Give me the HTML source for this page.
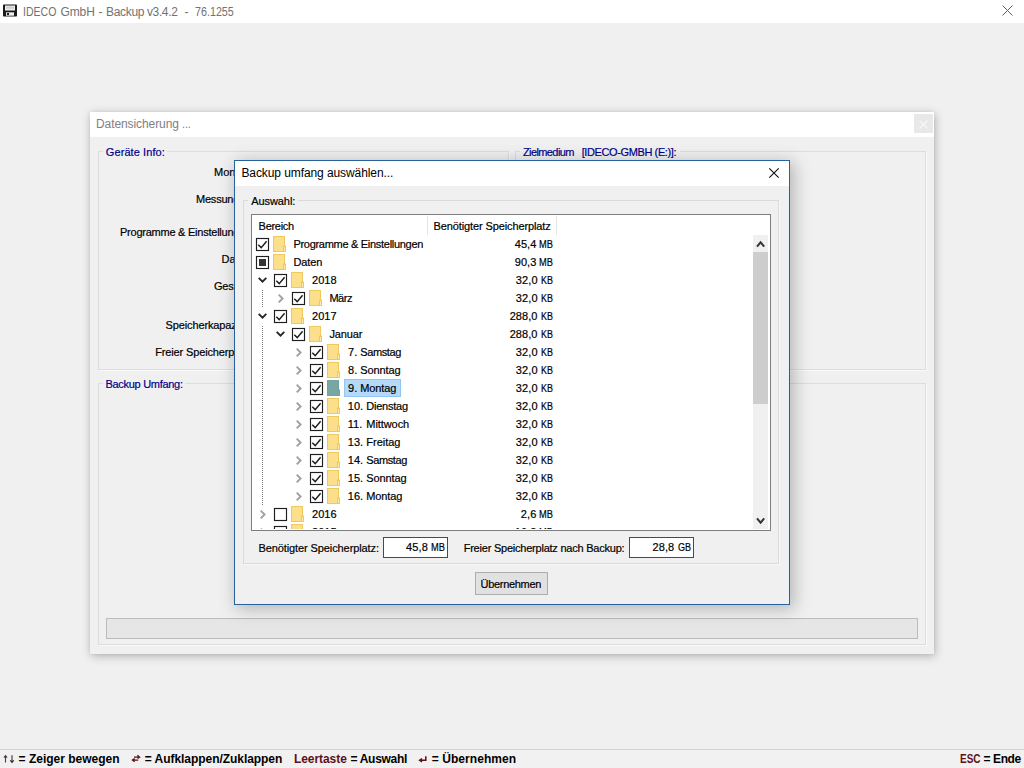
<!DOCTYPE html>
<html><head><meta charset="utf-8"><title>IDECO GmbH - Backup</title><style>
html,body{margin:0;padding:0;}
body{width:1024px;height:768px;overflow:hidden;background:#f0f0f0;position:relative;font-family:"Liberation Sans",sans-serif;color:#000;}
.t{position:absolute;white-space:pre;line-height:1;}
.s{-webkit-text-stroke:0.2px currentColor;}
.b{position:absolute;box-sizing:border-box;}
svg{position:absolute;overflow:visible;}
</style></head><body>
<div class="b" style="left:0px;top:0px;width:1024px;height:23px;background:#fff;"></div>
<svg style="left:3px;top:4px" width="14" height="13" viewBox="0 0 14 13"><rect x="0" y="0.5" width="14" height="12" rx="0.8" fill="#1a1a1a"/><rect x="2" y="1.5" width="10" height="5" fill="#ededed"/><rect x="3.2" y="2.6" width="7.6" height="2.2" fill="#cfcfcf"/><rect x="3" y="8.3" width="8" height="3.4" fill="#ececec"/><rect x="4" y="9" width="2" height="2" fill="#1a1a1a"/></svg>
<span class="t" style="left:23.25px;top:6px;font-size:12px;color:#727272;transform:scaleX(0.8789);transform-origin:0 0;">IDECO</span>
<span class="t" style="left:60.50px;top:6px;font-size:12px;letter-spacing:-0.123px;color:#727272;">GmbH</span>
<span class="t" style="left:98.60px;top:6px;font-size:12px;color:#727272;">-</span>
<span class="t" style="left:106.00px;top:6px;font-size:12px;letter-spacing:-0.325px;color:#727272;">Backup</span>
<span class="t" style="left:147.00px;top:6px;font-size:12px;letter-spacing:-0.378px;color:#727272;">v3.4.2</span>
<span class="t" style="left:184.50px;top:6px;font-size:12px;color:#727272;">-</span>
<span class="t" style="left:195.10px;top:6px;font-size:12px;color:#727272;transform:scaleX(0.8945);transform-origin:0 0;">76.1255</span>
<svg style="left:1001.5px;top:4.5px" width="11" height="11" viewBox="0 0 11 11"><path d="M0.5 0.5L10.5 10.5M10.5 0.5L0.5 10.5" stroke="#5f5f5f" stroke-width="1" fill="none"/></svg>
<div class="b" style="left:90px;top:112px;width:844px;height:542px;background:#f0f0f0;box-shadow:1px 2px 9px 0 rgba(0,0,0,0.26),0 0 4px 0 rgba(0,0,0,0.06);"></div>
<div class="b" style="left:90px;top:112px;width:844px;height:25px;background:#fff;"></div>
<span class="t" style="left:96.00px;top:118px;font-size:12px;letter-spacing:-0.089px;color:#808080;">Datensicherung</span>
<span class="t" style="left:181.80px;top:118px;font-size:12px;color:#808080;transform:scaleX(0.8798);transform-origin:0 0;">...</span>
<div class="b" style="left:914px;top:114px;width:19px;height:19px;background:#e8e8e8;"></div>
<svg style="left:919px;top:120px" width="9" height="9" viewBox="0 0 9 9"><path d="M0.5 0.5L8.5 8.5M8.5 0.5L0.5 8.5" stroke="#f6f6f6" stroke-width="1.2" fill="none"/></svg>
<div class="b" style="left:98px;top:151px;width:411px;height:219px;border:1px solid #dddddd;box-shadow:1px 1px 0 #f9f9f9;"></div>
<div class="b" style="left:515px;top:151px;width:411px;height:219px;border:1px solid #dddddd;box-shadow:1px 1px 0 #f9f9f9;"></div>
<div class="b" style="left:98px;top:383px;width:828px;height:262px;border:1px solid #dddddd;box-shadow:1px 1px 0 #f9f9f9;"></div>
<div class="b" style="left:103px;top:145px;width:64px;height:12px;background:#f0f0f0;"></div>
<span class="t s" style="left:105.80px;top:147px;font-size:11px;letter-spacing:0.082px;color:#00008a;">Geräte Info:</span>
<div class="b" style="left:520px;top:145px;width:160px;height:12px;background:#f0f0f0;"></div>
<span class="t s" style="left:523.00px;top:147px;font-size:11px;letter-spacing:-0.606px;color:#00008a;">Zielmedium</span>
<span class="t s" style="left:581.70px;top:147px;font-size:11px;letter-spacing:-0.391px;color:#00008a;">[IDECO-GMBH (E:)]:</span>
<div class="b" style="left:103px;top:377px;width:82px;height:12px;background:#f0f0f0;"></div>
<span class="t s" style="left:105.50px;top:379px;font-size:11px;letter-spacing:-0.294px;color:#00008a;">Backup Umfang:</span>
<span class="t s" style="left:214.00px;top:167px;font-size:11px;letter-spacing:0.037px;">Monitor:</span>
<span class="t s" style="left:196.00px;top:194px;font-size:11px;letter-spacing:-0.214px;">Messungen:</span>
<span class="t s" style="left:120.00px;top:227px;font-size:11px;letter-spacing:-0.241px;">Programme &amp; Einstellungen:</span>
<span class="t s" style="left:221.50px;top:254px;font-size:11px;letter-spacing:0.018px;">Daten:</span>
<span class="t s" style="left:214.00px;top:281px;font-size:11px;letter-spacing:-0.262px;">Gesamt:</span>
<span class="t s" style="left:165.50px;top:320px;font-size:11px;letter-spacing:-0.118px;">Speicherkapazität:</span>
<span class="t s" style="left:155.20px;top:347px;font-size:11px;letter-spacing:-0.135px;">Freier Speicherplatz:</span>
<div class="b" style="left:106px;top:618px;width:812px;height:21px;background:#e6e6e6;border:1px solid #bcbcbc;"></div>
<div class="b" style="left:0px;top:749px;width:1024px;height:1px;background:#d4d4d4;"></div>
<div class="b" style="left:0px;top:750px;width:1024px;height:18px;background:#f1f1f1;"></div>
<svg style="left:0;top:0" width="1" height="1"><path d="M5.5 762.6V755.6M3.9 757.6L5.5 755.6L7.1 757.6" stroke="#5a3c28" stroke-width="1.1" fill="none"/><path d="M12 755.2V762.2M10.2 760.3L12 762.4L13.8 760.3" stroke="#2e2e38" stroke-width="1.1" fill="none"/></svg>
<span class="t" style="left:18.60px;top:753px;font-size:12px;letter-spacing:-0.002px;font-weight:bold;">= Zeiger bewegen</span>
<svg style="left:0;top:0" width="1" height="1"><path d="M134 757.1H139.6M137.4 755.2L139.6 757.1L137.6 758.6M132.4 760.1H138.2M134.6 758.6L132.4 760.1L134.6 761.8" stroke="#5e1018" stroke-width="1.3" fill="none"/></svg>
<span class="t" style="left:144.80px;top:753px;font-size:12px;letter-spacing:-0.051px;font-weight:bold;">= Aufklappen/Zuklappen</span>
<span class="t" style="left:294.00px;top:753px;font-size:12px;letter-spacing:-0.070px;color:#5e1018;font-weight:bold;">Leertaste</span>
<span class="t" style="left:350.40px;top:753px;font-size:12px;letter-spacing:-0.280px;font-weight:bold;">= Auswahl</span>
<svg style="left:0;top:0" width="1" height="1"><path d="M425.8 756.2V760.2H420.4M422 758.5L419.6 760.2L422 761.9" stroke="#5e1018" stroke-width="1.5" fill="none"/></svg>
<span class="t" style="left:431.80px;top:753px;font-size:12px;letter-spacing:0.056px;font-weight:bold;">= Übernehmen</span>
<span class="t" style="left:960.30px;top:753px;font-size:12px;color:#5e1018;font-weight:bold;transform:scaleX(0.8349);transform-origin:0 0;">ESC</span>
<span class="t" style="left:983.60px;top:753px;font-size:12px;letter-spacing:-0.416px;font-weight:bold;">= Ende</span>
<div class="b" style="left:234px;top:160px;width:556px;height:445px;background:#f0f0f0;border:1px solid #27629f;box-shadow:3px 3px 16px 1px rgba(0,0,0,0.25),inset 0 0 0 1px #e4f3fb;"></div>
<div class="b" style="left:235px;top:161px;width:554px;height:25px;background:#fff;"></div>
<span class="t" style="left:241.40px;top:167px;font-size:12px;letter-spacing:-0.084px;">Backup umfang auswählen...</span>
<svg style="left:769px;top:168px" width="10" height="10" viewBox="0 0 10 10"><path d="M0.3 0.3L9.7 9.7M9.7 0.3L0.3 9.7" stroke="#111" stroke-width="1.15" fill="none"/></svg>
<div class="b" style="left:243px;top:200px;width:536px;height:364px;border:1px solid #dadada;box-shadow:1px 1px 0 #f9f9f9;"></div>
<div class="b" style="left:248px;top:194px;width:50px;height:12px;background:#f0f0f0;"></div>
<span class="t s" style="left:251.30px;top:196px;font-size:11px;letter-spacing:-0.091px;">Auswahl:</span>
<div class="b lv" style="left:251px;top:214px;width:520px;height:317px;background:#fff;border:1px solid #7e7e7e;overflow:hidden;"></div>
<div class="b" style="left:0;top:0;width:770px;height:529px;overflow:hidden;">
<div class="b" style="left:427px;top:216px;width:1px;height:19px;background:#e5e5e5;"></div>
<div class="b" style="left:556px;top:216px;width:1px;height:19px;background:#e5e5e5;"></div>
<span class="t s" style="left:258.60px;top:221px;font-size:11px;letter-spacing:-0.300px;">Bereich</span>
<span class="t s" style="left:433.60px;top:221px;font-size:11px;letter-spacing:-0.116px;">Benötigter Speicherplatz</span>
<div class="b" style="left:753px;top:235px;width:15px;height:295px;background:#f0f0f0;"></div>
<div class="b" style="left:753px;top:252px;width:15px;height:152px;background:#cdcdcd;"></div>
<svg style="left:753px;top:235px" width="16" height="17" viewBox="0 0 16 17"><path d="M4 11.6L7.6 7.4L11.2 11.6" stroke="#333" stroke-width="2" fill="none"/></svg>
<svg style="left:753px;top:513px" width="16" height="17" viewBox="0 0 16 17"><path d="M4 5.4L7.6 9.6L11.2 5.4" stroke="#333" stroke-width="2" fill="none"/></svg>
<svg style="left:256px;top:238px" width="13" height="13" viewBox="0 0 13 13"><rect x="0.5" y="0.5" width="12" height="12" fill="#fff" stroke="#1e1e1e" stroke-width="1.15"/><path d="M2.3 6.8L5.2 9.6L10.6 3.3" stroke="#1c1c1c" stroke-width="1.45" fill="none"/></svg>
<svg style="left:273px;top:236px" width="13" height="16" viewBox="0 0 13 16"><rect x="0.5" y="0.5" width="11" height="15" fill="#fbdf8a" stroke="#efc95f"/><rect x="10.5" y="10" width="2" height="5.5" fill="#fdeab0" stroke="#efc95f"/></svg>
<span class="t s" style="left:293.40px;top:239px;font-size:11px;letter-spacing:-0.290px;">Programme &amp; Einstellungen</span>
<span class="t s" style="left:538.60px;top:239px;font-size:11px;transform:scaleX(0.8424);transform-origin:0 0;">MB</span>
<span class="t s" style="left:514.70px;top:239px;font-size:11px;letter-spacing:0.096px;">45,4</span>
<svg style="left:256px;top:256px" width="13" height="13" viewBox="0 0 13 13"><rect x="0.5" y="0.5" width="12" height="12" fill="#fff" stroke="#1e1e1e" stroke-width="1.15"/><rect x="3" y="3" width="7" height="7" fill="#333"/></svg>
<svg style="left:273px;top:254px" width="13" height="16" viewBox="0 0 13 16"><rect x="0.5" y="0.5" width="11" height="15" fill="#fbdf8a" stroke="#efc95f"/><rect x="10.5" y="10" width="2" height="5.5" fill="#fdeab0" stroke="#efc95f"/></svg>
<span class="t s" style="left:293.40px;top:257px;font-size:11px;letter-spacing:-0.089px;">Daten</span>
<span class="t s" style="left:538.60px;top:257px;font-size:11px;transform:scaleX(0.8424);transform-origin:0 0;">MB</span>
<span class="t s" style="left:514.70px;top:257px;font-size:11px;letter-spacing:0.096px;">90,3</span>
<svg style="left:0;top:0" width="1" height="1"><path d="M258.7 277.9L262.5 281.7L266.3 277.9" stroke="#262626" stroke-width="1.9" fill="none"/></svg>
<svg style="left:274px;top:274px" width="13" height="13" viewBox="0 0 13 13"><rect x="0.5" y="0.5" width="12" height="12" fill="#fff" stroke="#1e1e1e" stroke-width="1.15"/><path d="M2.3 6.8L5.2 9.6L10.6 3.3" stroke="#1c1c1c" stroke-width="1.45" fill="none"/></svg>
<svg style="left:291px;top:272px" width="13" height="16" viewBox="0 0 13 16"><rect x="0.5" y="0.5" width="11" height="15" fill="#fbdf8a" stroke="#efc95f"/><rect x="10.5" y="10" width="2" height="5.5" fill="#fdeab0" stroke="#efc95f"/></svg>
<span class="t s" style="left:312.00px;top:275px;font-size:11px;letter-spacing:0.042px;">2018</span>
<span class="t s" style="left:540.60px;top:275px;font-size:11px;transform:scaleX(0.8110);transform-origin:0 0;">KB</span>
<span class="t s" style="left:515.80px;top:275px;font-size:11px;letter-spacing:0.096px;">32,0</span>
<svg style="left:0;top:0" width="1" height="1"><path d="M278.7 294.6L282.6 298.5L278.7 302.4" stroke="#a0a0a0" stroke-width="1.9" fill="none"/></svg>
<svg style="left:292px;top:292px" width="13" height="13" viewBox="0 0 13 13"><rect x="0.5" y="0.5" width="12" height="12" fill="#fff" stroke="#1e1e1e" stroke-width="1.15"/><path d="M2.3 6.8L5.2 9.6L10.6 3.3" stroke="#1c1c1c" stroke-width="1.45" fill="none"/></svg>
<svg style="left:309px;top:290px" width="13" height="16" viewBox="0 0 13 16"><rect x="0.5" y="0.5" width="11" height="15" fill="#fbdf8a" stroke="#efc95f"/><rect x="10.5" y="10" width="2" height="5.5" fill="#fdeab0" stroke="#efc95f"/></svg>
<span class="t s" style="left:329.40px;top:293px;font-size:11px;letter-spacing:-0.481px;">März</span>
<span class="t s" style="left:540.60px;top:293px;font-size:11px;transform:scaleX(0.8110);transform-origin:0 0;">KB</span>
<span class="t s" style="left:515.80px;top:293px;font-size:11px;letter-spacing:0.096px;">32,0</span>
<svg style="left:0;top:0" width="1" height="1"><path d="M258.7 313.9L262.5 317.7L266.3 313.9" stroke="#262626" stroke-width="1.9" fill="none"/></svg>
<svg style="left:274px;top:310px" width="13" height="13" viewBox="0 0 13 13"><rect x="0.5" y="0.5" width="12" height="12" fill="#fff" stroke="#1e1e1e" stroke-width="1.15"/><path d="M2.3 6.8L5.2 9.6L10.6 3.3" stroke="#1c1c1c" stroke-width="1.45" fill="none"/></svg>
<svg style="left:291px;top:308px" width="13" height="16" viewBox="0 0 13 16"><rect x="0.5" y="0.5" width="11" height="15" fill="#fbdf8a" stroke="#efc95f"/><rect x="10.5" y="10" width="2" height="5.5" fill="#fdeab0" stroke="#efc95f"/></svg>
<span class="t s" style="left:312.00px;top:311px;font-size:11px;letter-spacing:0.042px;">2017</span>
<span class="t s" style="left:540.60px;top:311px;font-size:11px;transform:scaleX(0.8110);transform-origin:0 0;">KB</span>
<span class="t s" style="left:509.70px;top:311px;font-size:11px;letter-spacing:0.068px;">288,0</span>
<svg style="left:0;top:0" width="1" height="1"><path d="M276.7 331.9L280.5 335.7L284.3 331.9" stroke="#262626" stroke-width="1.9" fill="none"/></svg>
<svg style="left:292px;top:328px" width="13" height="13" viewBox="0 0 13 13"><rect x="0.5" y="0.5" width="12" height="12" fill="#fff" stroke="#1e1e1e" stroke-width="1.15"/><path d="M2.3 6.8L5.2 9.6L10.6 3.3" stroke="#1c1c1c" stroke-width="1.45" fill="none"/></svg>
<svg style="left:309px;top:326px" width="13" height="16" viewBox="0 0 13 16"><rect x="0.5" y="0.5" width="11" height="15" fill="#fbdf8a" stroke="#efc95f"/><rect x="10.5" y="10" width="2" height="5.5" fill="#fdeab0" stroke="#efc95f"/></svg>
<span class="t s" style="left:329.40px;top:329px;font-size:11px;letter-spacing:-0.127px;">Januar</span>
<span class="t s" style="left:540.60px;top:329px;font-size:11px;transform:scaleX(0.8110);transform-origin:0 0;">KB</span>
<span class="t s" style="left:509.70px;top:329px;font-size:11px;letter-spacing:0.068px;">288,0</span>
<svg style="left:0;top:0" width="1" height="1"><path d="M296.7 348.6L300.6 352.5L296.7 356.4" stroke="#a0a0a0" stroke-width="1.9" fill="none"/></svg>
<svg style="left:310px;top:346px" width="13" height="13" viewBox="0 0 13 13"><rect x="0.5" y="0.5" width="12" height="12" fill="#fff" stroke="#1e1e1e" stroke-width="1.15"/><path d="M2.3 6.8L5.2 9.6L10.6 3.3" stroke="#1c1c1c" stroke-width="1.45" fill="none"/></svg>
<svg style="left:327px;top:344px" width="13" height="16" viewBox="0 0 13 16"><rect x="0.5" y="0.5" width="11" height="15" fill="#fbdf8a" stroke="#efc95f"/><rect x="10.5" y="10" width="2" height="5.5" fill="#fdeab0" stroke="#efc95f"/></svg>
<span class="t s" style="left:348.10px;top:347px;font-size:11px;">7.</span>
<span class="t s" style="left:360.30px;top:347px;font-size:11px;letter-spacing:-0.402px;">Samstag</span>
<span class="t s" style="left:540.60px;top:347px;font-size:11px;transform:scaleX(0.8110);transform-origin:0 0;">KB</span>
<span class="t s" style="left:515.80px;top:347px;font-size:11px;letter-spacing:0.096px;">32,0</span>
<svg style="left:0;top:0" width="1" height="1"><path d="M296.7 366.6L300.6 370.5L296.7 374.4" stroke="#a0a0a0" stroke-width="1.9" fill="none"/></svg>
<svg style="left:310px;top:364px" width="13" height="13" viewBox="0 0 13 13"><rect x="0.5" y="0.5" width="12" height="12" fill="#fff" stroke="#1e1e1e" stroke-width="1.15"/><path d="M2.3 6.8L5.2 9.6L10.6 3.3" stroke="#1c1c1c" stroke-width="1.45" fill="none"/></svg>
<svg style="left:327px;top:362px" width="13" height="16" viewBox="0 0 13 16"><rect x="0.5" y="0.5" width="11" height="15" fill="#fbdf8a" stroke="#efc95f"/><rect x="10.5" y="10" width="2" height="5.5" fill="#fdeab0" stroke="#efc95f"/></svg>
<span class="t s" style="left:348.10px;top:365px;font-size:11px;">8.</span>
<span class="t s" style="left:360.30px;top:365px;font-size:11px;letter-spacing:-0.114px;">Sonntag</span>
<span class="t s" style="left:540.60px;top:365px;font-size:11px;transform:scaleX(0.8110);transform-origin:0 0;">KB</span>
<span class="t s" style="left:515.80px;top:365px;font-size:11px;letter-spacing:0.096px;">32,0</span>
<svg style="left:0;top:0" width="1" height="1"><path d="M296.7 384.6L300.6 388.5L296.7 392.4" stroke="#a0a0a0" stroke-width="1.9" fill="none"/></svg>
<div class="b" style="left:344px;top:379px;width:57px;height:18px;background:#b4d9f9;border:1px solid #92c7f3;"></div>
<svg style="left:310px;top:382px" width="13" height="13" viewBox="0 0 13 13"><rect x="0.5" y="0.5" width="12" height="12" fill="#fff" stroke="#1e1e1e" stroke-width="1.15"/><path d="M2.3 6.8L5.2 9.6L10.6 3.3" stroke="#1c1c1c" stroke-width="1.45" fill="none"/></svg>
<svg style="left:327px;top:380px" width="13" height="16" viewBox="0 0 13 16"><rect x="0.5" y="0.5" width="11" height="15" fill="#77a6a3" stroke="#72a19e"/><rect x="10.5" y="10" width="2" height="5.5" fill="#80adaa" stroke="#72a19e"/></svg>
<span class="t s" style="left:348.10px;top:383px;font-size:11px;">9.</span>
<span class="t s" style="left:360.30px;top:383px;font-size:11px;letter-spacing:-0.118px;">Montag</span>
<span class="t s" style="left:540.60px;top:383px;font-size:11px;transform:scaleX(0.8110);transform-origin:0 0;">KB</span>
<span class="t s" style="left:515.80px;top:383px;font-size:11px;letter-spacing:0.096px;">32,0</span>
<svg style="left:0;top:0" width="1" height="1"><path d="M296.7 402.6L300.6 406.5L296.7 410.4" stroke="#a0a0a0" stroke-width="1.9" fill="none"/></svg>
<svg style="left:310px;top:400px" width="13" height="13" viewBox="0 0 13 13"><rect x="0.5" y="0.5" width="12" height="12" fill="#fff" stroke="#1e1e1e" stroke-width="1.15"/><path d="M2.3 6.8L5.2 9.6L10.6 3.3" stroke="#1c1c1c" stroke-width="1.45" fill="none"/></svg>
<svg style="left:327px;top:398px" width="13" height="16" viewBox="0 0 13 16"><rect x="0.5" y="0.5" width="11" height="15" fill="#fbdf8a" stroke="#efc95f"/><rect x="10.5" y="10" width="2" height="5.5" fill="#fdeab0" stroke="#efc95f"/></svg>
<span class="t s" style="left:347.80px;top:401px;font-size:11px;">10.</span>
<span class="t s" style="left:366.30px;top:401px;font-size:11px;letter-spacing:-0.231px;">Dienstag</span>
<span class="t s" style="left:540.60px;top:401px;font-size:11px;transform:scaleX(0.8110);transform-origin:0 0;">KB</span>
<span class="t s" style="left:515.80px;top:401px;font-size:11px;letter-spacing:0.096px;">32,0</span>
<svg style="left:0;top:0" width="1" height="1"><path d="M296.7 420.6L300.6 424.5L296.7 428.4" stroke="#a0a0a0" stroke-width="1.9" fill="none"/></svg>
<svg style="left:310px;top:418px" width="13" height="13" viewBox="0 0 13 13"><rect x="0.5" y="0.5" width="12" height="12" fill="#fff" stroke="#1e1e1e" stroke-width="1.15"/><path d="M2.3 6.8L5.2 9.6L10.6 3.3" stroke="#1c1c1c" stroke-width="1.45" fill="none"/></svg>
<svg style="left:327px;top:416px" width="13" height="16" viewBox="0 0 13 16"><rect x="0.5" y="0.5" width="11" height="15" fill="#fbdf8a" stroke="#efc95f"/><rect x="10.5" y="10" width="2" height="5.5" fill="#fdeab0" stroke="#efc95f"/></svg>
<span class="t s" style="left:347.80px;top:419px;font-size:11px;">11.</span>
<span class="t s" style="left:366.30px;top:419px;font-size:11px;letter-spacing:-0.072px;">Mittwoch</span>
<span class="t s" style="left:540.60px;top:419px;font-size:11px;transform:scaleX(0.8110);transform-origin:0 0;">KB</span>
<span class="t s" style="left:515.80px;top:419px;font-size:11px;letter-spacing:0.096px;">32,0</span>
<svg style="left:0;top:0" width="1" height="1"><path d="M296.7 438.6L300.6 442.5L296.7 446.4" stroke="#a0a0a0" stroke-width="1.9" fill="none"/></svg>
<svg style="left:310px;top:436px" width="13" height="13" viewBox="0 0 13 13"><rect x="0.5" y="0.5" width="12" height="12" fill="#fff" stroke="#1e1e1e" stroke-width="1.15"/><path d="M2.3 6.8L5.2 9.6L10.6 3.3" stroke="#1c1c1c" stroke-width="1.45" fill="none"/></svg>
<svg style="left:327px;top:434px" width="13" height="16" viewBox="0 0 13 16"><rect x="0.5" y="0.5" width="11" height="15" fill="#fbdf8a" stroke="#efc95f"/><rect x="10.5" y="10" width="2" height="5.5" fill="#fdeab0" stroke="#efc95f"/></svg>
<span class="t s" style="left:347.80px;top:437px;font-size:11px;">13.</span>
<span class="t s" style="left:366.30px;top:437px;font-size:11px;letter-spacing:-0.023px;">Freitag</span>
<span class="t s" style="left:540.60px;top:437px;font-size:11px;transform:scaleX(0.8110);transform-origin:0 0;">KB</span>
<span class="t s" style="left:515.80px;top:437px;font-size:11px;letter-spacing:0.096px;">32,0</span>
<svg style="left:0;top:0" width="1" height="1"><path d="M296.7 456.6L300.6 460.5L296.7 464.4" stroke="#a0a0a0" stroke-width="1.9" fill="none"/></svg>
<svg style="left:310px;top:454px" width="13" height="13" viewBox="0 0 13 13"><rect x="0.5" y="0.5" width="12" height="12" fill="#fff" stroke="#1e1e1e" stroke-width="1.15"/><path d="M2.3 6.8L5.2 9.6L10.6 3.3" stroke="#1c1c1c" stroke-width="1.45" fill="none"/></svg>
<svg style="left:327px;top:452px" width="13" height="16" viewBox="0 0 13 16"><rect x="0.5" y="0.5" width="11" height="15" fill="#fbdf8a" stroke="#efc95f"/><rect x="10.5" y="10" width="2" height="5.5" fill="#fdeab0" stroke="#efc95f"/></svg>
<span class="t s" style="left:347.80px;top:455px;font-size:11px;">14.</span>
<span class="t s" style="left:366.30px;top:455px;font-size:11px;letter-spacing:-0.402px;">Samstag</span>
<span class="t s" style="left:540.60px;top:455px;font-size:11px;transform:scaleX(0.8110);transform-origin:0 0;">KB</span>
<span class="t s" style="left:515.80px;top:455px;font-size:11px;letter-spacing:0.096px;">32,0</span>
<svg style="left:0;top:0" width="1" height="1"><path d="M296.7 474.6L300.6 478.5L296.7 482.4" stroke="#a0a0a0" stroke-width="1.9" fill="none"/></svg>
<svg style="left:310px;top:472px" width="13" height="13" viewBox="0 0 13 13"><rect x="0.5" y="0.5" width="12" height="12" fill="#fff" stroke="#1e1e1e" stroke-width="1.15"/><path d="M2.3 6.8L5.2 9.6L10.6 3.3" stroke="#1c1c1c" stroke-width="1.45" fill="none"/></svg>
<svg style="left:327px;top:470px" width="13" height="16" viewBox="0 0 13 16"><rect x="0.5" y="0.5" width="11" height="15" fill="#fbdf8a" stroke="#efc95f"/><rect x="10.5" y="10" width="2" height="5.5" fill="#fdeab0" stroke="#efc95f"/></svg>
<span class="t s" style="left:347.80px;top:473px;font-size:11px;">15.</span>
<span class="t s" style="left:366.30px;top:473px;font-size:11px;letter-spacing:-0.114px;">Sonntag</span>
<span class="t s" style="left:540.60px;top:473px;font-size:11px;transform:scaleX(0.8110);transform-origin:0 0;">KB</span>
<span class="t s" style="left:515.80px;top:473px;font-size:11px;letter-spacing:0.096px;">32,0</span>
<svg style="left:0;top:0" width="1" height="1"><path d="M296.7 492.6L300.6 496.5L296.7 500.4" stroke="#a0a0a0" stroke-width="1.9" fill="none"/></svg>
<svg style="left:310px;top:490px" width="13" height="13" viewBox="0 0 13 13"><rect x="0.5" y="0.5" width="12" height="12" fill="#fff" stroke="#1e1e1e" stroke-width="1.15"/><path d="M2.3 6.8L5.2 9.6L10.6 3.3" stroke="#1c1c1c" stroke-width="1.45" fill="none"/></svg>
<svg style="left:327px;top:488px" width="13" height="16" viewBox="0 0 13 16"><rect x="0.5" y="0.5" width="11" height="15" fill="#fbdf8a" stroke="#efc95f"/><rect x="10.5" y="10" width="2" height="5.5" fill="#fdeab0" stroke="#efc95f"/></svg>
<span class="t s" style="left:347.80px;top:491px;font-size:11px;">16.</span>
<span class="t s" style="left:366.30px;top:491px;font-size:11px;letter-spacing:-0.118px;">Montag</span>
<span class="t s" style="left:540.60px;top:491px;font-size:11px;transform:scaleX(0.8110);transform-origin:0 0;">KB</span>
<span class="t s" style="left:515.80px;top:491px;font-size:11px;letter-spacing:0.096px;">32,0</span>
<svg style="left:0;top:0" width="1" height="1"><path d="M260.7 510.6L264.6 514.5L260.7 518.4" stroke="#a0a0a0" stroke-width="1.9" fill="none"/></svg>
<svg style="left:274px;top:508px" width="13" height="13" viewBox="0 0 13 13"><rect x="0.5" y="0.5" width="12" height="12" fill="#fff" stroke="#1e1e1e" stroke-width="1.15"/></svg>
<svg style="left:291px;top:506px" width="13" height="16" viewBox="0 0 13 16"><rect x="0.5" y="0.5" width="11" height="15" fill="#fbdf8a" stroke="#efc95f"/><rect x="10.5" y="10" width="2" height="5.5" fill="#fdeab0" stroke="#efc95f"/></svg>
<span class="t s" style="left:312.00px;top:509px;font-size:11px;letter-spacing:0.042px;">2016</span>
<span class="t s" style="left:538.60px;top:509px;font-size:11px;transform:scaleX(0.8424);transform-origin:0 0;">MB</span>
<span class="t s" style="left:520.80px;top:509px;font-size:11px;letter-spacing:0.154px;">2,6</span>
<svg style="left:0;top:0" width="1" height="1"><path d="M260.7 528.6L264.6 532.5L260.7 536.4" stroke="#a0a0a0" stroke-width="1.9" fill="none"/></svg>
<svg style="left:274px;top:526px" width="13" height="13" viewBox="0 0 13 13"><rect x="0.5" y="0.5" width="12" height="12" fill="#fff" stroke="#1e1e1e" stroke-width="1.15"/></svg>
<svg style="left:291px;top:524px" width="13" height="16" viewBox="0 0 13 16"><rect x="0.5" y="0.5" width="11" height="15" fill="#fbdf8a" stroke="#efc95f"/><rect x="10.5" y="10" width="2" height="5.5" fill="#fdeab0" stroke="#efc95f"/></svg>
<span class="t s" style="left:312.00px;top:527px;font-size:11px;letter-spacing:0.042px;">2015</span>
<span class="t s" style="left:538.60px;top:527px;font-size:11px;transform:scaleX(0.8424);transform-origin:0 0;">MB</span>
<span class="t s" style="left:514.70px;top:527px;font-size:11px;letter-spacing:0.096px;">10,2</span>
<div class="b" style="left:262px;top:290px;width:1px;height:18px;background:repeating-linear-gradient(to bottom,#7c7c7c 0 1px,transparent 1px 2px);"></div>
<div class="b" style="left:262px;top:326px;width:1px;height:180px;background:repeating-linear-gradient(to bottom,#7c7c7c 0 1px,transparent 1px 2px);"></div>
<div class="b" style="left:280px;top:308px;width:1px;height:0px;background:repeating-linear-gradient(to bottom,#7c7c7c 0 1px,transparent 1px 2px);"></div>
</div>
<span class="t s" style="left:258.50px;top:543px;font-size:11px;letter-spacing:-0.101px;">Benötigter Speicherplatz:</span>
<div class="b" style="left:383px;top:537px;width:65px;height:21px;background:#fff;border:1px solid #4a4a4a;"></div>
<span class="t s" style="left:406.10px;top:542px;font-size:11px;letter-spacing:0.096px;">45,8</span>
<span class="t s" style="left:430.70px;top:542px;font-size:11px;transform:scaleX(0.8424);transform-origin:0 0;">MB</span>
<span class="t s" style="left:463.70px;top:543px;font-size:11px;letter-spacing:-0.224px;">Freier Speicherplatz nach Backup:</span>
<div class="b" style="left:629px;top:537px;width:65px;height:21px;background:#fff;border:1px solid #4a4a4a;"></div>
<span class="t s" style="left:652.60px;top:542px;font-size:11px;letter-spacing:0.030px;">28,8</span>
<span class="t s" style="left:677.70px;top:542px;font-size:11px;transform:scaleX(0.8242);transform-origin:0 0;">GB</span>
<div class="b" style="left:475px;top:572px;width:73px;height:23px;background:#e1e1e1;border:1px solid #adadad;"></div>
<span class="t s" style="left:480.60px;top:579px;font-size:11px;letter-spacing:-0.322px;">Übernehmen</span>
</body></html>
